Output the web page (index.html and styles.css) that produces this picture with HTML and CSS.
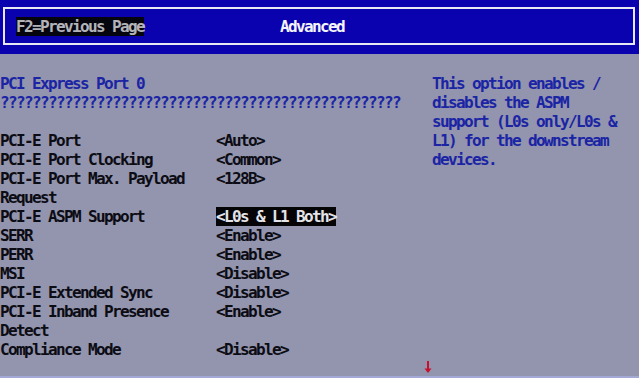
FILE: index.html
```html
<!DOCTYPE html>
<html>
<head>
<meta charset="utf-8">
<link rel="stylesheet" href="styles.css">
</head>
<body>
<div class="screen">
  <header class="topbar">
    <div class="frame">
      <span class="hint">F2=Previous Page</span>
      <span class="title">Advanced</span>
    </div>
  </header>
  <main class="content">
    <section class="settings">
      <div class="row heading"><span class="blue">PCI Express Port 0</span></div>
      <div class="row heading"><span class="blue">??????????????????????????????????????????????????</span></div>
      <div class="row blank"></div>
      <div class="row"><span class="label">PCI-E Port</span><span class="value">&lt;Auto&gt;</span></div>
      <div class="row"><span class="label">PCI-E Port Clocking</span><span class="value">&lt;Common&gt;</span></div>
      <div class="row"><span class="label">PCI-E Port Max. Payload</span><span class="value">&lt;128B&gt;</span></div>
      <div class="row"><span class="label">Request</span><span class="value"></span></div>
      <div class="row"><span class="label">PCI-E ASPM Support</span><span class="value"><span class="selected">&lt;L0s &amp; L1 Both&gt;</span></span></div>
      <div class="row"><span class="label">SERR</span><span class="value">&lt;Enable&gt;</span></div>
      <div class="row"><span class="label">PERR</span><span class="value">&lt;Enable&gt;</span></div>
      <div class="row"><span class="label">MSI</span><span class="value">&lt;Disable&gt;</span></div>
      <div class="row"><span class="label">PCI-E Extended Sync</span><span class="value">&lt;Disable&gt;</span></div>
      <div class="row"><span class="label">PCI-E Inband Presence</span><span class="value">&lt;Enable&gt;</span></div>
      <div class="row"><span class="label">Detect</span><span class="value"></span></div>
      <div class="row"><span class="label">Compliance Mode</span><span class="value">&lt;Disable&gt;</span></div>
      <div class="more">
        <svg width="8" height="12" viewBox="0 0 8 12"><path d="M4 0V9" stroke="#c8102e" stroke-width="2"/><path d="M0.5 7.5H7.5L4 12Z" fill="#c8102e"/></svg>
      </div>
    </section>
    <aside class="help">This option enables /<br>disables the ASPM<br>support (L0s only/L0s &amp;<br>L1) for the downstream<br>devices.</aside>
  </main>
  <div class="bottom-edge"></div>
</div>
</body>
</html>
```
FILE: styles.css
```css
html, body {
  margin: 0;
  padding: 0;
}
body {
  background: #9394ad;
  font-family: "DejaVu Sans Mono", "Liberation Mono", monospace;
  font-size: 16px;
  font-weight: bold;
  letter-spacing: -1.633px;
  line-height: 19px;
}
.screen {
  height: 378px;
  display: flex;
  flex-direction: column;
  overflow: hidden;
}
.topbar {
  background: #0a02ae;
  padding: 7px 4px 9px 3px;
}
.frame {
  border: 2px solid #e8e8f4;
  padding: 8px 0 7px 11px;
  height: 19px;
  display: flex;
  gap: 136px;
}
.hint {
  background: #050510;
  color: #b4b4b8;
  white-space: pre;
}
.title {
  color: #f4f4fa;
  white-space: pre;
}
.content {
  flex: 1;
  display: flex;
  padding-top: 20px;
}
.settings {
  width: 432px;
  display: flex;
  flex-direction: column;
}
.row {
  display: grid;
  grid-template-columns: 216px 1fr;
  height: 19px;
  white-space: pre;
  color: #0c0c14;
}
.row.heading {
  display: block;
}
.blue {
  color: #1a24a4;
}
.selected {
  background: #050508;
  color: #e4e4e8;
}
.more {
  margin-top: 2px;
  padding-left: 424px;
  height: 12px;
  display: flex;
}
.help {
  flex: 1;
  color: #1a24a4;
  white-space: nowrap;
}
.bottom-edge {
  height: 2px;
  background: #a4a8d4;
}
```
